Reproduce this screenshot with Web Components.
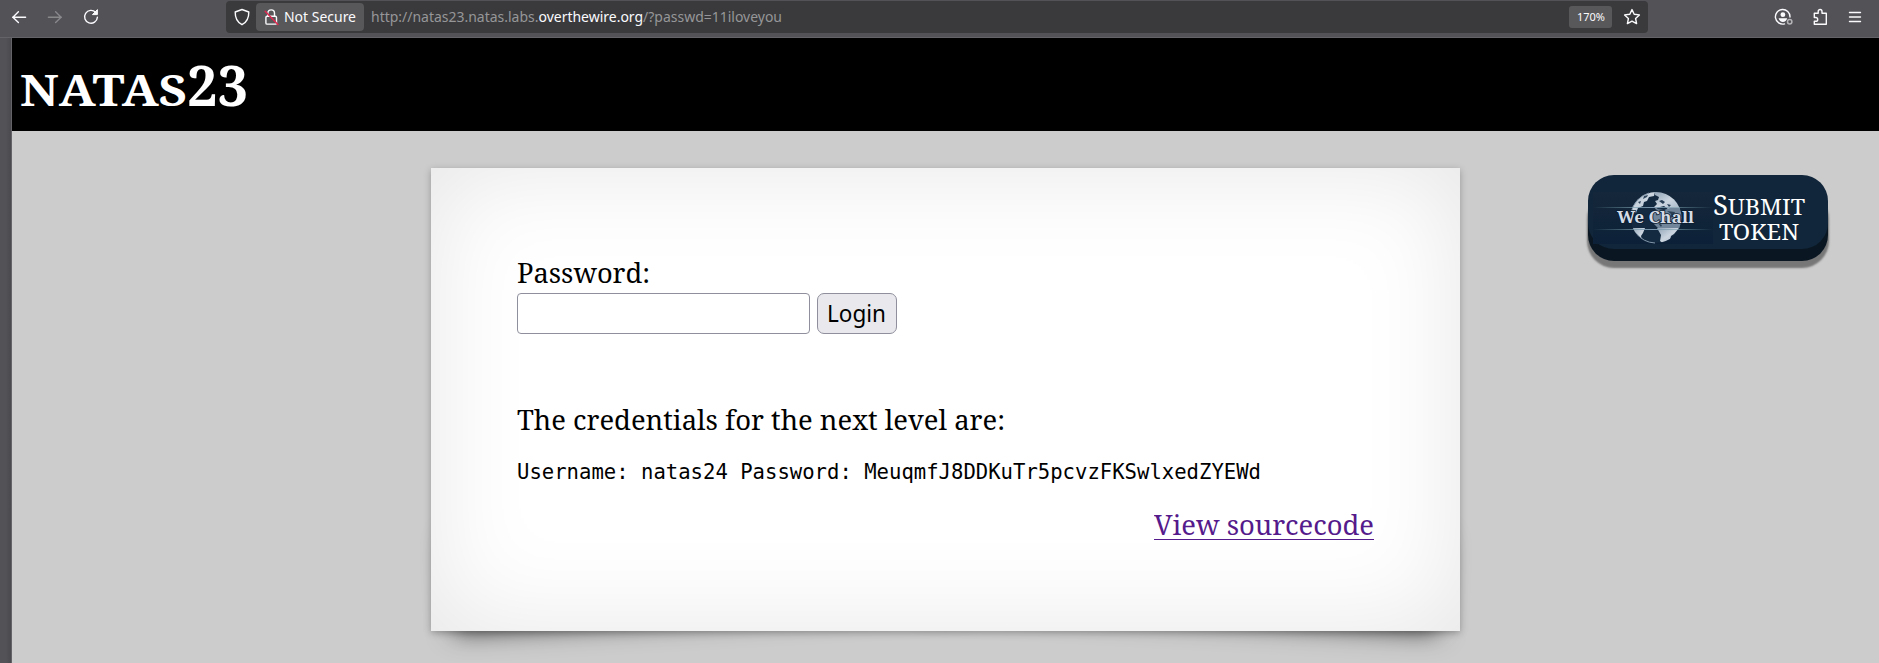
<!DOCTYPE html>
<html lang="en"><head><meta charset="utf-8"><title>natas23</title>
<style>html,body{margin:0;height:100%;overflow:hidden;background:#ccc}</style></head>
<body>
<natas-window></natas-window>
<script>
const define=(name,html)=>customElements.define(name,class extends HTMLElement{
  connectedCallback(){ if(!this.shadowRoot) this.attachShadow({mode:'open'}).innerHTML=html; }
});

/* One line of text set to a given measure: size, line height, width. */
customElements.define('type-line',class extends HTMLElement{
  connectedCallback(){
    if(this.shadowRoot) return;
    const r=this.attachShadow({mode:'open'});
    r.innerHTML='<style>:host{display:block;white-space:pre}span{display:inline-block;transform-origin:0 50%}</style><span><slot></slot></span>';
    const w=+this.getAttribute('width'), s=r.querySelector('span');
    this.style.fontSize=this.getAttribute('size')+'px';
    this.style.lineHeight=(this.getAttribute('line')||30)+'px';
    this.style.height=(this.getAttribute('box')||this.getAttribute('line')||30)+'px';
    this.style.width=w+'px';
    const n=s.getBoundingClientRect().width;
    if(n) s.style.transform='scaleX('+(w/n)+')';
  }
});

define('browser-bar',`<style>
:host{display:flex;box-sizing:border-box;height:38px;background:#535257;border-bottom:1px solid #646468;font-family:"Noto Sans",sans-serif;color:#fbfbfe}
.nav{display:flex;width:226px;box-sizing:border-box;padding:9px 0 0 11px;gap:20px}
svg{display:block;fill:none;stroke:currentColor;stroke-width:1.4;stroke-linecap:round;stroke-linejoin:round;flex:none}
.url{display:flex;width:1422px;height:32px;margin-top:1px;background:#3a3a3c;border-radius:4px;align-items:center}
.shield{margin-left:7px}
.sec{display:flex;align-items:center;width:108px;height:28px;margin-left:5px;background:#58585a;border-radius:4px}
.sec svg{margin:0 4px 0 7px}
.addr{display:flex;margin-left:7px;color:#969698}
b{font-weight:400;color:#fbfbfe}
.zoom{margin-left:auto;display:flex;justify-content:center;width:43px;height:22px;background:#58585a;border-radius:3px}
.star{margin:0 7px 0 11px}
.tools{display:flex;flex:1;gap:20px;padding:8px 0 0 126px}
</style>
<div class="nav">
<svg width="16" height="16"><path d="M14.6 8.2H1.6M7.4 2.8 1.9 8.2l5.5 5.4"/></svg>
<svg width="16" height="16" style="color:#89898c"><path d="M1.4 8.2h13M8.6 2.8l5.5 5.4-5.5 5.4"/></svg>
<svg width="17" height="16"><path d="M12.7 3.4A6.4 6.4 0 1 0 14.4 8.2"/><path d="M9.8 5.6h4.6V1z" fill="currentColor" stroke-width="1"/></svg>
</div>
<div class="url">
<svg class="shield" width="18" height="18"><path d="M9 1.5 15.8 4c.1 5.7-1.4 10-6.8 12.7C3.6 14 2.1 9.7 2.2 4z"/></svg>
<div class="sec"><svg width="17" height="18"><rect x="2.9" y="8.3" width="10.6" height="7.8" rx="1.2"/><path d="M4.9 8.2V5.2a3.3 3.3 0 0 1 6.6 0v3"/><path d="M2.2 3.2 14.9 16.4" stroke="#e22850" stroke-width="1.5"/></svg><type-line size="13.8" line="28" width="72">Not Secure</type-line></div>
<type-line class="addr" size="13.8" line="28" width="411">http://natas23.natas.labs.<b>overthewire.org</b>/?passwd=11iloveyou</type-line>
<div class="zoom"><type-line size="11" line="22" width="28">170%</type-line></div>
<svg class="star" width="18" height="18"><path d="m9 1.6 2.2 4.7 5.2.6-3.8 3.6 1 5.1L9 13.1l-4.600 2.500 1-5.100L1.600 6.900l5.200-.6z"/></svg>
</div>
<div class="tools">
<svg width="19" height="18"><path d="M16 9A7.300 7.300 0 1 0 10.500 15.900"/><circle cx="8.900" cy="6.700" r="2.400" fill="currentColor" stroke="none"/><path d="M4.600 10.300h8.600c-.5 2.500-2.300 3.600-4.300 3.600s-3.800-1.100-4.300-3.600z" fill="currentColor" stroke="none"/><circle cx="15.700" cy="13.800" r="2.200" stroke="#b5b5b8" stroke-width="1.500"/></svg>
<svg width="15" height="18"><path d="M1.300 5.300h3.900V3.400a1.900 1.900 0 0 1 3.800 0v1.900h4.300v10.900H1.300v-2.900h1.500a1.900 1.900 0 0 0 0-3.800H1.300z"/></svg>
<svg width="14" height="18"><path d="M1.500 4.500h11M1.500 9h11M1.500 13.500h11"/></svg>
</div>`);

define('level-title',`<style>
:host{display:flex;align-items:baseline;box-sizing:border-box;height:93px;padding:11px 0 0 8px;background:#000;color:#fff;font-family:"Noto Serif","DejaVu Serif Condensed","DejaVu Serif",serif;font-weight:700}
type-line:first-child{-webkit-text-stroke:.4px #fff}
</style><type-line size="43" line="70" width="167">NATAS</type-line><type-line size="56" line="70" width="61">23</type-line>`);

define('paper-card',`<style>
:host{display:block;position:relative;z-index:0;width:1029px;height:463px}
.face{box-sizing:border-box;height:100%;padding:85px 86px;background:#fff;box-shadow:0 2px 7px rgba(0,0,0,.27),inset 0 0 102px rgba(0,0,0,.1)}
:host::before,:host::after{content:"";position:absolute;z-index:-1;bottom:26px;width:50%;height:20%;box-shadow:0 14px 26px rgba(0,0,0,.7)}
:host::before{left:20px;transform:rotate(-3deg)}
:host::after{right:20px;transform:rotate(3deg)}
</style><div class="face"><slot></slot></div>`);

define('login-form',`<style>
:host{display:block}
.row{display:flex;gap:7px}
input{box-sizing:border-box;width:293px;height:41px;margin:0;border:1px solid #8f8f9d;border-radius:4px;background:#fff}
button{box-sizing:border-box;width:80px;height:41px;padding:0 0 0 9px;border:1px solid #8f8f9d;border-radius:7px;background:#e9e9ed;color:#000;font-family:"Noto Sans",sans-serif;text-align:left}
</style><type-line size="27.2" line="40" width="133">Password:</type-line>
<div class="row"><input><button><type-line size="22.7" line="39" width="59">Login</type-line></button></div>`);

define('level-result',`<style>
:host{display:block}
.mono{font-family:"DejaVu Sans Mono",monospace;margin-top:19px}
a{display:block;width:220px;margin:20px 0 0 auto;color:#551a8b;text-decoration:none}
.u{border-bottom:1px solid #551a8b}
</style><type-line size="27.2" line="37" width="488">The credentials for the next level are:</type-line>
<type-line class="mono" size="20.7" line="31" width="744">Username: natas24 Password: MeuqmfJ8DDKuTr5pcvzFKSwlxedZYEWd</type-line>
<a><type-line class="u" size="27.2" line="33" box="31" width="220">View sourcecode</type-line></a>`);

define('token-button',`<style>
:host{display:flex;box-sizing:border-box;width:240px;height:74px;border-radius:26px;background:#11263a;box-shadow:0 12px 0 #0a1722,0 18px 2px 1px #777;color:#fff;font-family:"Noto Serif","DejaVu Serif Condensed","DejaVu Serif",serif}
.logo{width:125px;height:74px;flex:none}
.label{padding-top:16px}
.one{display:flex;align-items:baseline}
.two{margin:-1px 0 0 6px}
</style>
<svg class="logo" viewBox="0 0 125 74">
<defs><linearGradient id="g" x1="0" y1="0" x2="1" y2="1"><stop stop-color="#8fa3b5"/><stop offset=".5" stop-color="#cbd5e0"/><stop offset="1" stop-color="#a3b4c5"/></linearGradient>
<linearGradient id="l"><stop stop-color="#7aa" stop-opacity="0"/><stop offset=".5" stop-color="#7f9ab2"/><stop offset="1" stop-color="#7aa" stop-opacity="0"/></linearGradient>
<linearGradient id="b" x1="0" y1="0" x2="0" y2="1"><stop stop-color="#15273a"/><stop offset="1" stop-color="#0c2138"/></linearGradient>
<clipPath id="c"><circle cx="68" cy="42.500" r="25.500"/></clipPath></defs>
<rect x="5" y="17" width="120" height="52" fill="url(#b)"/>
<g clip-path="url(#c)">
<circle cx="68" cy="42.500" r="25.500" fill="#142a40"/>
<path d="M40 38 46 24 58 16l9 1-1 4-5 1-2 4-3 1-1 4-5 2-2 5z" fill="url(#g)"/>
<path d="m56 21 4-1-1 2-4 2zM50 27l3-1-1 3z" fill="#30475c"/>
<path d="M67 17h13l15 12v5H80l-4-3-4 1-4 2-2-2 3-3-2-3 3-1 1-3-4-2z" fill="url(#g)"/>
<path d="m71 26 3-1 3 2-2 2zM66 33l5-1 2 2zM79 29l4 1-2 2z" fill="#263d54"/>
<path d="m64 37 5-3 7 1 6-2h13v20H70l-7-7z" fill="#71869b"/>
<path d="m79 36 4 3-1 4 3-1 2-5zM70 48l4 2-1 2z" fill="#2a4056"/>
<path d="M43 53h14l-2 5-2 3 1 4 4 6-12-6z" fill="url(#g)"/>
<path d="M69 53h22l-5 6-3 2-1 4-6 4-4-3 1-6z" fill="url(#g)"/>
</g>
<path d="M43 38A25.500 25.500 0 0 1 61 18M48 58A25.500 25.500 0 0 0 67 68" fill="none" stroke="#8497aa"/>
<rect x="5" y="32" width="120" height="1" fill="url(#l)"/><rect x="5" y="54" width="120" height="1" fill="url(#l)"/>
<text x="29" y="48" textLength="77" lengthAdjust="spacingAndGlyphs" font-size="16.500" font-weight="700" font-family="Noto Serif,DejaVu Serif Condensed,serif" fill="#d5dce6" stroke="#0b1c30" stroke-width="1.600" paint-order="stroke">We Chall</text>
</svg>
<div class="label"><div class="one"><type-line size="27" line="27" width="15">S</type-line><type-line size="21.500" line="27" width="77">UBMIT</type-line></div><type-line class="two" size="21.500" line="25" width="80">TOKEN</type-line></div>`);

define('natas-window',`<style>
:host{display:flex;flex-direction:column;width:1879px;height:663px;overflow:hidden;font-family:"Noto Serif","DejaVu Serif Condensed","DejaVu Serif",serif;color:#000}
.view{display:flex;flex:1}
.edge{width:12px;box-sizing:border-box;background:linear-gradient(90deg,#535257 55%,#4a494d);border-right:1px solid #646468}
.page{flex:1;background:#ccc}
.body{display:grid;grid-template-columns:1029px 240px;column-gap:128px;padding:37px 0 0 419px}
token-button{margin-top:7px}
.result{margin-top:67px}
</style>
<browser-bar></browser-bar>
<div class="view"><div class="edge"></div><div class="page"><level-title></level-title>
<div class="body"><paper-card><login-form></login-form><level-result class="result"></level-result></paper-card><token-button></token-button></div></div></div>`);
</script></body></html>
